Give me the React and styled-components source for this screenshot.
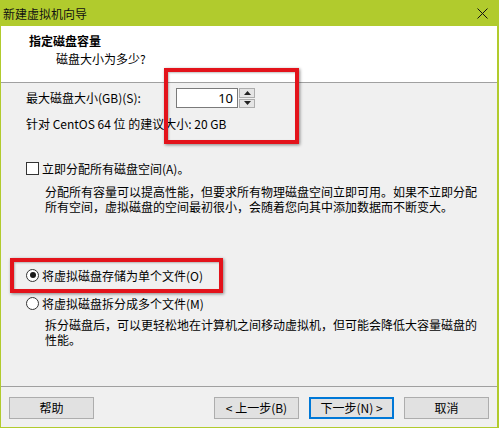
import React from "react";
import styled, { createGlobalStyle } from "styled-components";

const Global = createGlobalStyle`
  html, body { margin: 0; padding: 0; background: #ffffff; }
  body { font-family: "Noto Sans CJK SC", "Microsoft YaHei", sans-serif; font-size: 12px; color: #000; }
`;

const Window = styled.div`
  position: relative;
  width: 499px;
  height: 428px;
  box-sizing: border-box;
  border-left: 1px solid #b1cb2d;
  border-right: 2px solid #b1cb2d;
  border-bottom: 1px solid #b1cb2d;
  display: flex;
  flex-direction: column;
  background: #f0f0f0;
  overflow: hidden;
`;

const TitleBar = styled.div`
  height: 26px;
  flex: none;
  background: #b1cb2d;
  display: flex;
  align-items: center;
  justify-content: space-between;
  padding: 0 0 0 3px;
  margin-left: -1px;
  margin-right: -2px;
`;

const TitleText = styled.span`
  font-size: 12px;
  line-height: 16px;
  color: #111;
  margin-top: 1px;
`;

const CloseBtn = styled.div`
  width: 30px;
  height: 26px;
  display: flex;
  align-items: center;
  justify-content: center;
  margin-right: 2px;
`;

const Header = styled.div`
  flex: none;
  background: #ffffff;
  border-bottom: 1px solid #a0a0a0;
  display: flex;
  flex-direction: column;
  padding-top: 7px;
  box-sizing: border-box;
  height: 57px;
`;

const HeadTitle = styled.div`
  font-weight: bold;
  line-height: 16px;
  padding-left: 28px;
`;

const HeadSub = styled.div`
  line-height: 16px;
  margin-top: 2px;
  padding-left: 55px;
`;

const Body = styled.div`
  flex: 1;
  display: flex;
  flex-direction: column;
  padding: 5px 0 0 25px;
`;

const SizeRow = styled.div`
  display: flex;
  align-items: center;
  height: 20px;
`;

const SizeLabel = styled.span`
  width: 150px;
  line-height: 16px;
`;

const Spin = styled.div`
  display: flex;
  height: 20px;
`;

const SpinInput = styled.div`
  height: 18px;
  border: 1px solid #7a7a7a;
  background: #fff;
  display: flex;
  align-items: center;
  justify-content: flex-end;
  padding-right: 4px;
  box-sizing: content-box;
  width: 56px;
  font-family: "Noto Sans", "Noto Sans CJK SC", sans-serif;
  font-size: 13px;
`;

const SpinButtons = styled.div`
  display: flex;
  flex-direction: column;
  margin-left: 1px;
  gap: 1px;
`;

const SpinBtn = styled.div`
  width: 14px;
  height: 8px;
  border: 1px solid #adadad;
  background: #e5e5e5;
  display: flex;
  align-items: center;
  justify-content: center;
`;

const Line = styled.div`
  line-height: 16px;
  margin-top: ${(p) => p.$mt || 0}px;
`;

const OptionRow = styled.div`
  display: flex;
  align-items: center;
  height: 16px;
  margin-top: ${(p) => p.$mt || 0}px;
`;

const CheckBox = styled.span`
  width: 11px;
  height: 11px;
  border: 1px solid #333;
  background: #fff;
  margin-right: 3px;
  flex: none;
`;

const Radio = styled.span`
  width: 11px;
  height: 11px;
  border: 1px solid #333;
  border-radius: 50%;
  background: #fff;
  margin-right: 3px;
  flex: none;
  display: flex;
  align-items: center;
  justify-content: center;
  &::after {
    content: "";
    display: ${(p) => (p.$checked ? "block" : "none")};
    width: 6px;
    height: 6px;
    border-radius: 50%;
    background: #1a1a1a;
  }
`;

const Desc = styled.div`
  line-height: 15px;
  padding-left: 19px;
  margin-top: ${(p) => p.$mt || 0}px;
  white-space: nowrap;
`;

const Footer = styled.div`
  height: 41px;
  flex: none;
  box-sizing: border-box;
  border-top: 1px solid #a0a0a0;
  display: flex;
  align-items: flex-start;
  padding: 10px 8px 0 8px;
`;

const Spacer = styled.div`
  flex: 1;
`;

const Button = styled.div`
  width: 85px;
  height: 22px;
  box-sizing: border-box;
  border: ${(p) => (p.$default ? "2px solid #0078d7" : "1px solid #adadad")};
  background: #e1e1e1;
  display: flex;
  align-items: center;
  justify-content: center;
  line-height: 16px;
  margin-left: ${(p) => p.$ml || 0}px;
`;

const Highlight = styled.div`
  position: absolute;
  border: 4px solid #e3131b;
  box-shadow: 1px 1px 3px rgba(0, 0, 0, 0.45), inset 1px 1px 2px rgba(0, 0, 0, 0.25);
  box-sizing: border-box;
  pointer-events: none;
`;

export default function App() {
  return (
    <>
      <Global />
      <Window>
        <TitleBar>
          <TitleText>新建虚拟机向导</TitleText>
          <CloseBtn>
            <svg width="11" height="11" viewBox="0 0 11 11">
              <path d="M0.5 0.5 L10.5 10.5 M10.5 0.5 L0.5 10.5" stroke="#111" strokeWidth="1" />
            </svg>
          </CloseBtn>
        </TitleBar>
        <Header>
          <HeadTitle>指定磁盘容量</HeadTitle>
          <HeadSub>磁盘大小为多少?</HeadSub>
        </Header>
        <Body>
          <SizeRow>
            <SizeLabel>最大磁盘大小(GB)(S):</SizeLabel>
            <Spin>
              <SpinInput>10</SpinInput>
              <SpinButtons>
                <SpinBtn>
                  <svg width="7" height="4" viewBox="0 0 7 4">
                    <path d="M3.5 0 L7 4 L0 4 Z" fill="#222" />
                  </svg>
                </SpinBtn>
                <SpinBtn>
                  <svg width="7" height="4" viewBox="0 0 7 4">
                    <path d="M0 0 L7 0 L3.5 4 Z" fill="#222" />
                  </svg>
                </SpinBtn>
              </SpinButtons>
            </Spin>
          </SizeRow>
          <Line $mt={8}>针对 CentOS 64 位 的建议大小: 20 GB</Line>
          <OptionRow $mt={28}>
            <CheckBox />
            <span>立即分配所有磁盘空间(A)。</span>
          </OptionRow>
          <Desc $mt={8}>
            分配所有容量可以提高性能，但要求所有物理磁盘空间立即可用。如果不立即分配
            <br />
            所有空间，虚拟磁盘的空间最初很小，会随着您向其中添加数据而不断变大。
          </Desc>
          <OptionRow $mt={53}>
            <Radio $checked />
            <span>将虚拟磁盘存储为单个文件(O)</span>
          </OptionRow>
          <OptionRow $mt={12}>
            <Radio />
            <span>将虚拟磁盘拆分成多个文件(M)</span>
          </OptionRow>
          <Desc $mt={6}>
            拆分磁盘后，可以更轻松地在计算机之间移动虚拟机，但可能会降低大容量磁盘的
            <br />
            性能。
          </Desc>
        </Body>
        <Footer>
          <Button>帮助</Button>
          <Spacer />
          <Button>&lt; 上一步(B)</Button>
          <Button $default $ml={10}>下一步(N) &gt;</Button>
          <Button $ml={10}>取消</Button>
        </Footer>
        <Highlight style={{ left: 163, top: 68, width: 135, height: 76 }} />
        <Highlight style={{ left: 9, top: 258, width: 213, height: 35 }} />
      </Window>
    </>
  );
}
